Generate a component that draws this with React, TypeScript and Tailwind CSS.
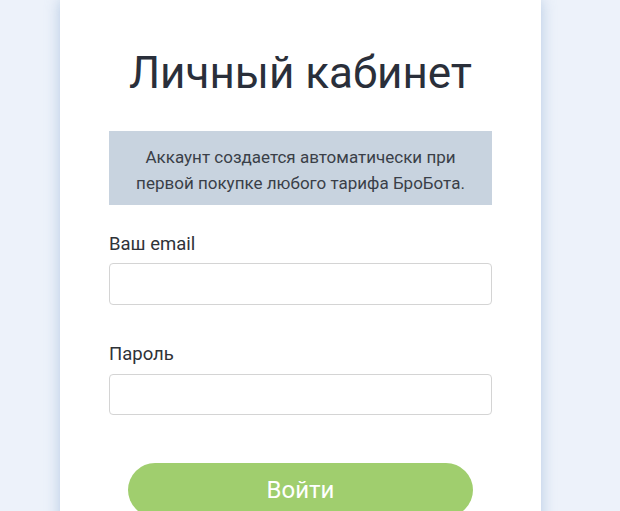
import React from "react";

export default function App() {
  return (
    <div
      className="w-[620px] h-[511px] overflow-hidden bg-[#edf2fa] flex justify-start"
      style={{ fontFamily: "Roboto, 'Liberation Sans', sans-serif" }}
    >
      <div className="ml-[60px] w-[481px] h-[560px] bg-white shadow-[0_0_14px_rgba(110,150,200,0.45)] flex flex-col pt-[47px] px-[49px]">
        <h1 className="text-center text-[44px] leading-[52px] text-[#2a2f3a] font-normal">
          Личный кабинет
        </h1>
        <div className="mt-[32px] bg-[#c8d3df] pt-[13px] pb-[9px] px-2 text-center text-[17px] leading-[26px] text-[#3a3f48]">
          Аккаунт создается автоматически при
          <br />
          первой покупке любого тарифа БроБота.
        </div>
        <label className="mt-[27px] text-[18.5px] leading-[24px] text-[#2f3238]">Ваш email</label>
        <input
          type="email"
          className="mt-[7px] h-[42px] w-full rounded-[4px] border border-[#d4d4d4] bg-white outline-none"
        />
        <label className="mt-[37px] text-[18.5px] leading-[24px] text-[#2f3238]">Пароль</label>
        <input
          type="password"
          className="mt-[8px] h-[41px] w-full rounded-[4px] border border-[#d4d4d4] bg-white outline-none"
        />
        <button className="mt-[48px] mx-auto w-[345px] h-[54px] rounded-full bg-[#a0ce6e] text-white text-[24px] leading-[52px]">
          Войти
        </button>
      </div>
    </div>
  );
}
